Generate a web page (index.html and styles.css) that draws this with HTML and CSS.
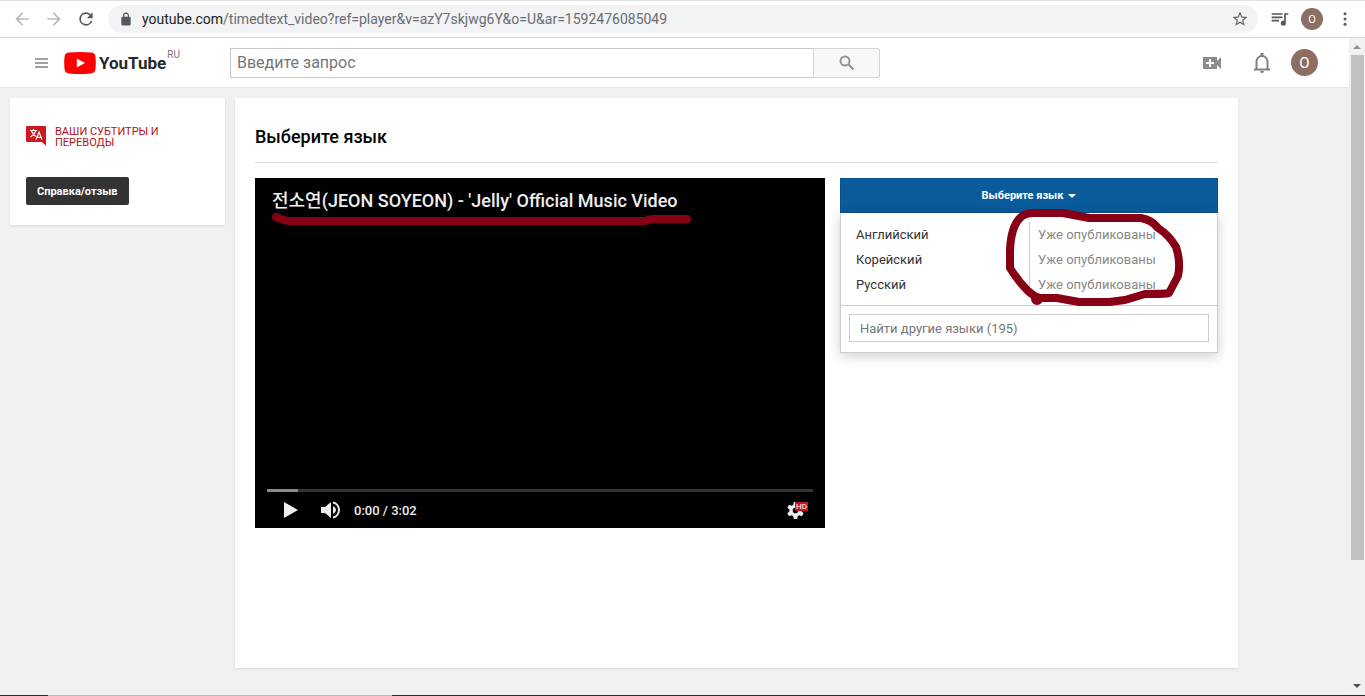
FILE: index.html
```html
<!DOCTYPE html>
<html lang="ru">
<head>
<meta charset="utf-8">
<title>Выберите язык - YouTube</title>
<link rel="stylesheet" href="styles.css">
</head>
<body>
<header class="browser-bar">
  <button class="tool" aria-label="Назад"><svg width="20" height="20" viewBox="0 0 24 24" fill="#b8babd"><path d="M20 11H7.800l5.600-5.600L12 4l-8 8 8 8 1.400-1.400L7.800 13H20z"/></svg></button>
  <button class="tool" aria-label="Вперёд"><svg width="20" height="20" viewBox="0 0 24 24" fill="#b8babd"><path d="M4 11h12.200l-5.600-5.600L12 4l8 8-8 8-1.400-1.400 5.600-5.600H4z"/></svg></button>
  <button class="tool" aria-label="Обновить"><svg width="20" height="20" viewBox="0 0 24 24" fill="#55585c"><path d="M17.650 6.350A8 8 0 1 0 19.730 14h-2.080A6 6 0 1 1 12 6c1.660 0 3.140.69 4.220 1.780L13 11h7V4z"/></svg></button>
  <div class="address">
    <svg width="14" height="14" viewBox="0 0 24 24" fill="#55585c"><path d="M18 8h-1V6A5 5 0 0 0 7 6v2H6a2 2 0 0 0-2 2v11a2 2 0 0 0 2 2h12a2 2 0 0 0 2-2V10a2 2 0 0 0-2-2zM9 8V6a3 3 0 0 1 6 0v2z"/></svg>
    <span class="url"><span class="host">youtube.com</span>/timedtext_video?ref=player&amp;v=azY7skjwg6Y&amp;o=U&amp;ar=1592476085049</span>
    <button class="star" aria-label="В закладки"><svg width="18" height="18" viewBox="0 0 24 24" fill="#5f6368"><path d="M22 9.240l-7.190-.62L12 2 9.190 8.630 2 9.240l5.460 4.730L5.820 21 12 17.270 18.180 21l-1.630-7.030zM12 15.400l-3.760 2.270 1-4.280-3.320-2.880 4.380-.38L12 6.100l1.710 4.040 4.380.38-3.320 2.880 1 4.280z"/></svg></button>
  </div>
  <button class="tool media" aria-label="Медиа"><svg width="20" height="20" viewBox="0 0 24 24" fill="#55585c"><path d="M2 5h13v2H2zm0 4h13v2H2zm0 4h9v2H2zM17 5h5v2h-3v10a3 3 0 1 1-2-2.820z"/></svg></button>
  <button class="avatar avatar-small">O</button>
  <button class="tool dots" aria-label="Меню"><svg width="18" height="18" viewBox="0 0 24 24" fill="#55585c"><circle cx="12" cy="5" r="2"/><circle cx="12" cy="12" r="2"/><circle cx="12" cy="19" r="2"/></svg></button>
</header>

<div class="viewport">
  <div class="page">
    <header class="masthead">
      <button class="plain guide" aria-label="Меню"><svg width="13" height="10" viewBox="0 0 13 10" fill="#a0a0a0"><path d="M0 0h13v2H0zM0 4h13v2H0zM0 8h13v2H0z"/></svg></button>
      <a class="logo" href="#" aria-label="YouTube">
        <svg width="32" height="22" viewBox="0 0 32 22"><path fill="#f00" d="M5 .6Q16-.5 27 .6Q30.600 1 31.300 4Q32.300 11 31.300 18Q30.600 21 27 21.400Q16 22.500 5 21.400Q1.400 21 .7 18Q-.3 11 .7 4Q1.400 1 5 .6z"/><path fill="#fff" d="M12.800 6.500v9l8.200-4.500z"/></svg>
        <span class="wordmark">YouTube</span><span class="country">RU</span>
      </a>
      <form class="search">
        <input type="text" class="search-box" placeholder="Введите запрос" aria-label="Введите запрос">
        <button type="button" class="search-button" aria-label="Поиск"><svg width="16" height="16" viewBox="0 0 16 16" fill="none" stroke="#949494"><circle cx="6" cy="6" r="4.500" stroke-width="2"/><path d="M9.500 9.500l5 5" stroke-width="2.200"/></svg></button>
      </form>
      <div class="account">
        <button class="plain" aria-label="Создать"><svg width="18" height="12" viewBox="0 0 18 12"><path fill="#8c8c8c" d="M0 0h14v4l4-4v12l-4-4v4H0z"/><path fill="#fff" d="M6 2h2v3h3v2H8v3H6V7H3V5h3z"/></svg></button>
        <button class="plain" aria-label="Уведомления"><svg width="18" height="20" viewBox="0 0 18 20"><path fill="none" stroke="#808080" stroke-width="2" d="M1 16.500h16M3.500 16V8.500a5.500 5.500 0 0 1 11 0V16"/><path fill="#808080" d="M7.500 0h3v3h-3zM7 18h4l-1 2H8z"/></svg></button>
        <button class="avatar avatar-large">O</button>
      </div>
    </header>

    <div class="content">
      <aside class="card sidebar">
        <a class="nav-link" href="#">
          <svg width="20" height="20" viewBox="0 0 20 20"><path fill="#cc181e" d="M1 0h18q1 0 1 1v19l-4-4H1q-1 0-1-1V1q0-1 1-1z"/><path fill="none" stroke="#fff" stroke-width="1.200" d="M4 4.500h7M7.500 3v1.500M10 4.500Q8.500 8.500 4.500 11M5.500 5q1.500 3.500 4.500 5.500M10 13.500l3-7.500 3 7.500M11 11.300h4"/></svg>
          <span>Ваши субтитры и переводы</span>
        </a>
        <button class="help">Справка/отзыв</button>
      </aside>

      <main class="card main">
        <h1 class="title">Выберите язык</h1>
        <div class="columns">
          <section class="player">
            <h2 class="video-title">전소연(JEON SOYEON) - 'Jelly' Official Music Video</h2>
            <svg class="underline" width="422" height="14" viewBox="0 0 422 14" fill="none" stroke="#880015" stroke-width="8" stroke-linecap="round" stroke-linejoin="round"><path d="M5 4Q10 7 18 8H374Q378 6 383 6H416"/></svg>
            <div class="controls">
              <div class="progress"><div class="loaded"></div></div>
              <div class="control-row">
                <button class="plain play" aria-label="Воспроизвести"><svg width="14" height="16" viewBox="0 0 14 16" fill="#eee"><path d="M0 0v16l14-8z"/></svg></button>
                <button class="plain volume" aria-label="Громкость"><svg width="20" height="18" viewBox="0 0 20 18"><path fill="#eee" d="M0 6h4l6-5v16l-6-5H0z"/><path fill="none" stroke="#eee" stroke-width="2" d="M12 1.500a7.700 7.700 0 0 1 0 15"/><path fill="#eee" d="M12 5q3 1.500 3 4t-3 4z"/></svg></button>
                <span class="time">0:00 / 3:02</span>
                <button class="plain settings" aria-label="Настройки"><svg width="17" height="17" viewBox="0 0 20 20"><path fill="#eee" d="M8 0h4l.6 3.200 2 1.200 3-1.200 2 3.500L17.200 8.800v2.400l2.400 2.100-2 3.500-3-1.200-2 1.200L12 20H8l-.6-3.200-2-1.200-3 1.200-2-3.500 2.400-2.100V8.800L.4 6.700l2-3.500 3 1.200 2-1.200z"/><circle cx="10" cy="10" r="3.300" fill="#000"/></svg><span class="hd">HD</span></button>
              </div>
            </div>
          </section>

          <section class="picker">
            <button class="picker-button">Выберите язык <svg width="8" height="4" viewBox="0 0 8 4" fill="#fff"><path d="M0 0h8L4 4z"/></svg></button>
            <div class="picker-menu">
              <ul class="languages">
                <li><span class="name">Английский</span><span class="status">Уже опубликованы</span></li>
                <li><span class="name">Корейский</span><span class="status">Уже опубликованы</span></li>
                <li><span class="name">Русский</span><span class="status">Уже опубликованы</span></li>
              </ul>
              <div class="find"><input type="text" class="find-box" placeholder="Найти другие языки (195)" aria-label="Найти другие языки"></div>
            </div>
            <svg class="circle" width="180" height="100" viewBox="0 0 180 100" fill="none" stroke="#880015" stroke-width="8" stroke-linecap="round" stroke-linejoin="round"><path d="M34 90L25 83Q15 73 7 60V42Q8 18 18 9Q23 5 30 5H60L86 10H138Q149 12 155 20Q166 27 173 39Q178 54 175 68L166 85Q162 86 142 86L122 92L106 94H76L54 90H34"/><circle cx="34" cy="91" r="2"/></svg>
          </section>
        </div>
      </main>
    </div>
  </div>
  <div class="scrollbar">
    <svg width="8" height="4" viewBox="0 0 8 4" fill="#909090"><path d="M0 4h8L4 0z"/></svg>
    <div class="track"><div class="thumb"></div></div>
    <svg width="8" height="4" viewBox="0 0 8 4" fill="#505050"><path d="M0 0h8L4 4z"/></svg>
  </div>
</div>
<footer class="taskbar-edge"></footer>
</body>
</html>
```
FILE: styles.css
```css
* { box-sizing: border-box; }

body {
  margin: 0;
  height: 100vh;
  display: flex;
  flex-direction: column;
  overflow: hidden;
  background: #f0f0f0;
  color: #333;
  font-family: Roboto, "Noto Sans CJK KR", sans-serif;
  font-size: 13px;
}

button { border: 0; margin: 0; padding: 0; background: none; font-family: inherit; }
a { text-decoration: none; }
svg { display: block; flex: none; }

/* Browser toolbar */
.browser-bar {
  display: flex;
  align-items: center;
  height: 38px;
  flex: none;
  padding: 0 11px 0 12px;
  background: #fff;
  border-top: 1px solid #dee1e6;
  border-bottom: 1px solid #d4d5d7;
}
.tool { width: 20px; margin-right: 12px; }
.address {
  flex: 1;
  display: flex;
  align-items: center;
  height: 28px;
  padding: 0 9px 0 11px;
  border-radius: 14px;
  background: #f1f3f4;
}
.url {
  flex: 1;
  margin-left: 9px;
  font-family: Roboto, sans-serif;
  font-size: 14px;
  color: #6a6d71;
  white-space: nowrap;
}
.host { color: #202124; }
.tool.media { margin: 0 11px 0 12px; }
.tool.dots { width: 18px; margin: 0 0 0 13px; }
.avatar {
  display: flex;
  align-items: center;
  justify-content: center;
  border-radius: 50%;
  background: #8d6e63;
  color: #fff;
}
.avatar-small { width: 22px; height: 22px; font-size: 11px; }
.avatar-large { width: 27px; height: 27px; font-size: 15px; }

.viewport { flex: 1; min-height: 0; display: flex; }
.page { flex: 1; min-width: 0; }

/* Site header */
.masthead {
  display: flex;
  align-items: center;
  height: 50px;
  padding: 0 31px 0 35px;
  background: #fff;
  border-bottom: 1px solid #e8e8e8;
}
.plain { display: flex; align-items: center; }
.logo { display: flex; align-items: center; width: 166px; margin-left: 16px; }
.wordmark {
  margin-left: 3px;
  font-family: Roboto, sans-serif;
  font-size: 17px;
  font-weight: bold;
  line-height: 22px;
  color: #282828;
}
.country { align-self: flex-start; margin: -3px 0 0 1px; font-size: 10px; line-height: 12px; color: #777; }
.search { display: flex; width: 650px; }
.search-box {
  flex: 1;
  min-width: 0;
  height: 30px;
  padding: 0 6px;
  border: 1px solid #c6c6c6;
  border-radius: 0;
  font-family: Roboto, sans-serif;
  font-size: 16px;
}
.search-box::placeholder, .find-box::placeholder { color: #767676; opacity: 1; }
.search-button {
  display: flex;
  align-items: center;
  justify-content: center;
  width: 67px;
  height: 30px;
  margin-left: -1px;
  border: 1px solid #d3d3d3;
  border-radius: 0 2px 2px 0;
  background: #f8f8f8;
}
.account { display: flex; align-items: center; margin-left: auto; }
.account .plain { margin-right: 32px; }
.account .plain + .plain { margin-right: 20px; }

/* Page content */
.content {
  display: flex;
  align-items: flex-start;
  gap: 10px;
  max-width: 1238px;
  padding: 10px 0 0 10px;
}
.card { background: #fff; box-shadow: 0 1px 2px rgba(0, 0, 0, .1); }
.sidebar { width: 215px; flex: none; padding: 28px 16px 20px; }
.nav-link { display: flex; gap: 9px; color: #b31217; font-size: 11px; line-height: 11px; text-transform: uppercase; }
.nav-link span { width: 120px; }
.help {
  height: 28px;
  margin-top: 29px;
  padding: 0 11px;
  border-radius: 2px;
  background: #333;
  color: #fff;
  font-size: 11px;
  font-weight: bold;
}
.main { flex: 1; min-width: 0; min-height: 570px; padding: 0 20px; }
.title {
  margin: 0 0 15px;
  padding: 27px 0 13px;
  border-bottom: 1px solid #e2e2e2;
  color: #000;
  font-size: 18px;
  font-weight: 500;
  line-height: 24px;
}
.columns { display: flex; align-items: flex-start; gap: 15px; }

/* Video player */
.player {
  position: relative;
  display: flex;
  flex-direction: column;
  justify-content: space-between;
  width: 570px;
  height: 350px;
  padding: 10px 12px 6px;
  background: #000;
  color: #eee;
}
.video-title { margin: 0 0 0 5px; font-size: 18px; font-weight: 500; line-height: 26px; }
.underline { position: absolute; left: 16px; top: 35px; }
.progress { height: 3px; background: #333; }
.loaded { width: 31px; height: 3px; background: #8a8a8a; }
.control-row { display: flex; align-items: center; height: 24px; margin-top: 6px; padding: 0 5px 0 17px; }
.volume { margin: 0 13px 0 23px; }
.time { font-weight: 500; }
.settings { position: relative; margin-left: auto; padding-right: 4px; }
.hd {
  position: absolute;
  right: 0;
  top: 0;
  padding: 0 1px;
  background: #c4161c;
  color: #fff;
  font-size: 8px;
  line-height: 9px;
}

/* Language picker */
.picker { position: relative; flex: 1; min-width: 0; }
.picker-button {
  display: flex;
  align-items: center;
  justify-content: center;
  gap: 5px;
  width: 100%;
  height: 35px;
  border: 1px solid #08518b;
  background: #0a5b9b;
  color: #fff;
  font-size: 11px;
  font-weight: bold;
}
.picker-menu { border: 1px solid #ccc; border-top: 0; background: #fff; box-shadow: 0 3px 12px rgba(0, 0, 0, .2); }
.languages { list-style: none; margin: 0; padding: 9px 15px 8px; border-bottom: 1px solid #ccc; }
.languages li { display: flex; line-height: 25px; }
.name { flex: 1; }
.status { width: 173px; padding-left: 8px; border-left: 1px solid #ccc; color: #888; }
.find { padding: 8px 8px 10px; }
.find-box {
  display: block;
  width: 100%;
  height: 28px;
  padding: 0 10px;
  border: 1px solid #ccc;
  font-family: Roboto, sans-serif;
  font-size: 13px;
}
.circle { position: absolute; left: 163px; top: 30px; }

/* Scrollbar */
.scrollbar {
  display: flex;
  flex-direction: column;
  align-items: center;
  width: 16px;
  padding: 7px 0;
  background: #f1f1f1;
}
.track { flex: 1; width: 13px; margin: 6px 0; }
.thumb { height: 81%; background: #c1c1c1; }

.taskbar-edge { height: 1px; flex: none; background: linear-gradient(to right, #2a2c30 48px, #bbb 48px, #bbb 392px, #2a2c30 392px); }
```
